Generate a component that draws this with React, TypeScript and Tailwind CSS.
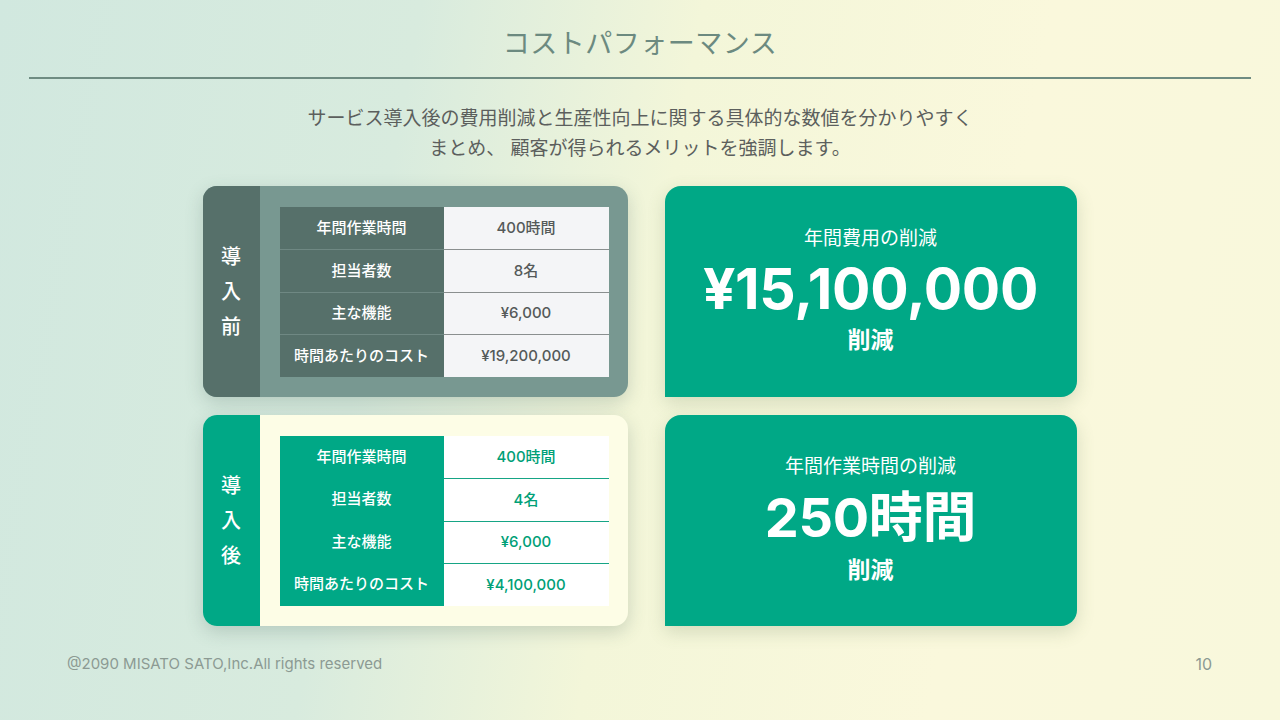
import React from "react";

const before = [
  ["年間作業時間", "400時間"],
  ["担当者数", "8名"],
  ["主な機能", "¥6,000"],
  ["時間あたりのコスト", "¥19,200,000"],
];

const after = [
  ["年間作業時間", "400時間"],
  ["担当者数", "4名"],
  ["主な機能", "¥6,000"],
  ["時間あたりのコスト", "¥4,100,000"],
];

function CompareCard({
  label,
  rows,
  variant,
}: {
  label: string[];
  rows: string[][];
  variant: "before" | "after";
}) {
  const isBefore = variant === "before";
  return (
    <div
      className={
        "flex h-[211px] rounded-[14px] overflow-hidden shadow-[0_6px_18px_rgba(60,90,80,0.22)] " +
        (isBefore ? "bg-[#789891]" : "bg-[#fdfde6]")
      }
    >
      {/* Side label */}
      <div
        className={
          "w-[57px] shrink-0 flex flex-col items-center justify-center gap-[15px] text-white text-[20px] font-medium leading-none " +
          (isBefore ? "bg-[#56706a]" : "bg-[#00a886]")
        }
      >
        {label.map((c) => (
          <span key={c}>{c}</span>
        ))}
      </div>

      <div className="flex-1 flex items-center pl-[20px] pr-[19px]">
        <div className="w-full flex flex-col">
          {rows.map(([k, v], i) => (
            <div key={k} className="flex h-[42.5px]">
              <div
                className={
                  "w-[164px] flex items-center justify-center text-white text-[15px] font-medium " +
                  (isBefore ? "bg-[#56706a]" : "bg-[#00a886]") +
                  (i > 0 && isBefore ? " border-t border-[#6f8883]" : "")
                }
              >
                {k}
              </div>
              <div
                className={
                  "flex-1 flex items-center justify-center text-[15px] font-medium " +
                  (isBefore ? "bg-[#f4f5f7] text-[#555a5a]" : "bg-white text-[#00a077]") +
                  (i > 0
                    ? isBefore
                      ? " border-t border-[#8a8f8f]"
                      : " border-t border-[#16a585]"
                    : "")
                }
              >
                {v}
              </div>
            </div>
          ))}
        </div>
      </div>
    </div>
  );
}

function ResultCard({
  title,
  value,
  className,
}: {
  title: string;
  value: string;
  className: { wrap: string; value: string; unit: string };
}) {
  return (
    <div
      className={
        "h-[211px] bg-[#00a886] rounded-tl-[16px] rounded-tr-[16px] rounded-br-[16px] shadow-[0_6px_18px_rgba(80,110,70,0.2)] flex flex-col items-center text-white " +
        className.wrap
      }
    >
      <div className="text-[19px] leading-none">{title}</div>
      <div className={"font-bold leading-none tracking-[-0.3px] " + className.value}>{value}</div>
      <div className={"text-[23px] font-bold leading-none " + className.unit}>削減</div>
    </div>
  );
}

export default function App() {
  return (
    <div
      className="w-[1280px] h-[720px] overflow-hidden relative flex flex-col items-center bg-[linear-gradient(100deg,#d1e8df_0%,#d8ebde_30%,#f3f6d9_50%,#faf8dc_75%,#f8f8dc_100%)]"
      style={{ fontFamily: 'Inter, "Noto Sans CJK JP", sans-serif' }}
    >
      {/* Title */}
      <h1 className="mt-[30px] text-[27px] leading-none text-[#6c8a80] font-normal tracking-[0.5px]">
        コストパフォーマンス
      </h1>
      <div className="mt-[20px] w-[1222px] h-[2px] bg-[#6f8c82]" />

      {/* Lead */}
      <p className="mt-[25px] text-[19px] leading-[30px] text-[#5c5f5d] text-center">
        サービス導入後の費用削減と生産性向上に関する具体的な数値を分かりやすく
        <br />
        まとめ、 顧客が得られるメリットを強調します。
      </p>

      {/* Content */}
      <div className="mt-[22px] grid grid-cols-[425px_412px] gap-x-[37px] gap-y-[18px] ml-[-1px]">
        <CompareCard label={["導", "入", "前"]} rows={before} variant="before" />
        <ResultCard
          title="年間費用の削減"
          value="¥15,100,000"
          className={{ wrap: "pt-[43px]", value: "text-[57px] mt-[12px]", unit: "mt-[12px]" }}
        />
        <CompareCard label={["導", "入", "後"]} rows={after} variant="after" />
        <ResultCard
          title="年間作業時間の削減"
          value="250時間"
          className={{ wrap: "pt-[42px]", value: "text-[54px] mt-[15px]", unit: "mt-[14px]" }}
        />
      </div>

      {/* Footer */}
      <div className="w-full flex justify-between items-center pl-[67px] pr-[68px] mt-[26px] text-[15px] text-[#8c9a93]">
        <span>@2090 MISATO SATO,Inc.All rights reserved</span>
        <span className="text-[16px]">10</span>
      </div>
    </div>
  );
}
